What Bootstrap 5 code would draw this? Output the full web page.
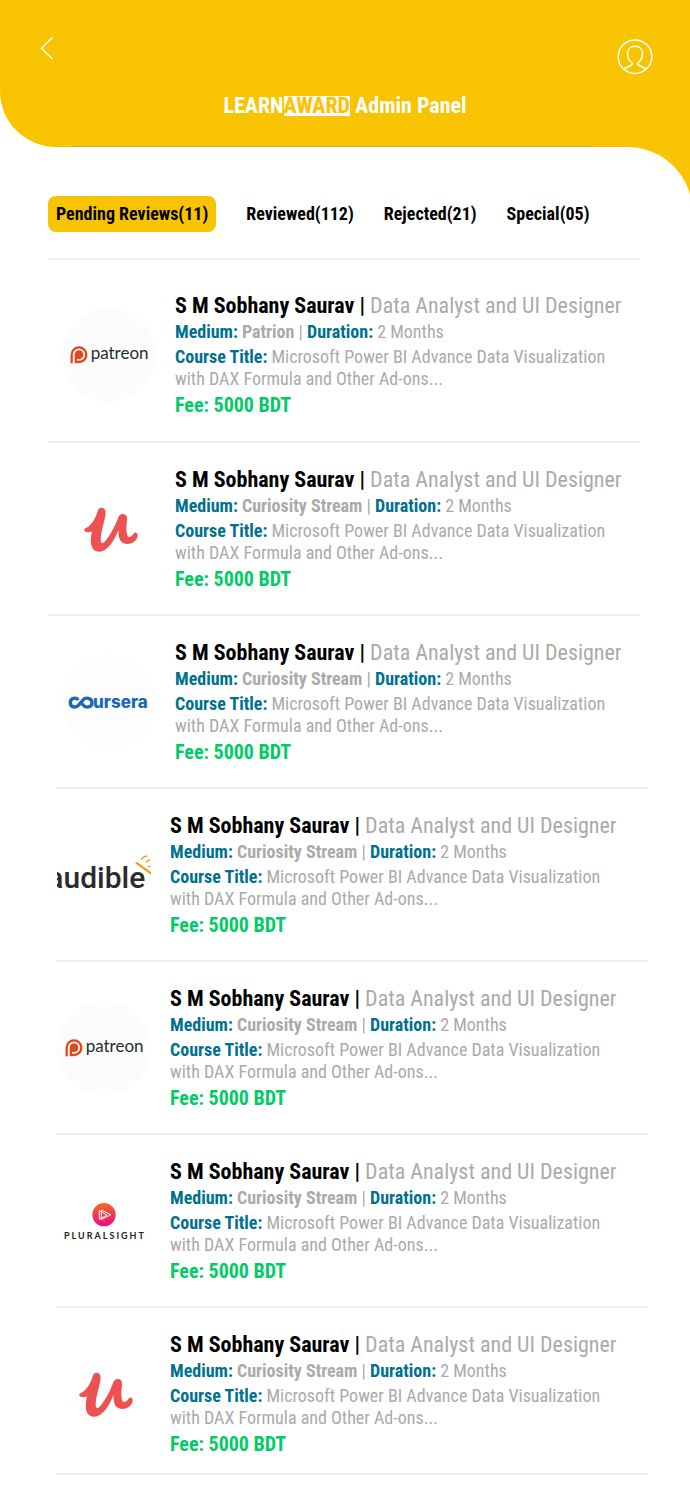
<!DOCTYPE html>
<html lang="en">
<head>
<meta charset="utf-8">
<meta name="viewport" content="width=device-width, initial-scale=1">
<title>LearnAward Admin Panel</title>
<link href="https://cdn.jsdelivr.net/npm/bootstrap@5.3.0/dist/css/bootstrap.min.css" rel="stylesheet">
<style>
  :root { --brand: #f8c300; }
  body { font-family: "Roboto Condensed", "Liberation Sans Narrow", Roboto, sans-serif; color: #000; background: #fff; }
  .topbar { background: var(--brand); border-bottom-left-radius: 56px; padding: 36px 36px 0 36px; }
  .topbar h1 { font-size: 22px; line-height: 24px; margin: 18px 0 28px; }
  .hl { background: #f8f8f8; color: var(--brand); line-height: 20px; display: inline-block; }
  .topline { height: 1px; background: #bdb751; margin: 0 62px 0 36px; }
  .corner { right: 0; top: 100%; }
  .tabs { padding: 49px 48px 26px; gap: 30px; }
  .tab { font-size: 18px; line-height: 36px; font-weight: 700; border: 0; background: none; padding: 0; border-radius: 8px; color: #000; }
  .tab.active { background: var(--brand); padding: 0 8px; }
  .reviews { margin: 0 50px 0 48px; }
  .reviews.shifted { margin: 0 42px 0 56px; }
  .review { border-top: 2px solid #eee; padding: 23px 0 22px 14px; gap: 19px; }
  .shifted .review { padding-left: 1px; }
  .review.first { padding-top: 32px; padding-bottom: 23px; }
  .review.last { padding-bottom: 16px; border-bottom: 2px solid #eee; }
  .logo { width: 94px; height: 94px; }
  .soft { color: #aaa; }
  .key { color: #00708f; font-weight: 700; }
  .who { font-size: 22px; line-height: 28px; }
  .medium { font-size: 18px; line-height: 24px; margin-bottom: 2px; }
  .course { font-size: 18px; line-height: 22px; margin-bottom: 2px; }
  .fee { font-size: 20px; line-height: 26px; color: #00cc66; font-weight: 700; }
</style>
</head>
<body>
<svg width="0" height="0" class="position-absolute" aria-hidden="true">
  <defs>
    <linearGradient id="sunset" x1="0" y1="0" x2="0" y2="1"><stop offset="0" stop-color="#f8691c"/><stop offset="1" stop-color="#e80a8a"/></linearGradient>
    <symbol id="patreon" viewBox="66 51 282 282">
      <circle cx="207" cy="192" r="141" fill="#fcfcfc"/>
      <path d="M95 217V191A22 22 0 1 1 117 213Q112 213 108 211" fill="none" stroke="#e6461a" stroke-width="7"/>
      <path d="M104 217V191A13 13 0 1 1 117 204Q113 204 111 203V217z" fill="#e6461a"/>
      <text x="152" y="204" font-family="Lato" font-size="51" fill="#232d32">patreon</text>
    </symbol>
    <symbol id="udemy" viewBox="36 0 282 282">
      <path d="M104 140C122 134 136 112 143 88C146 78 152 76 158 78C166 80 168 88 166 100C163 123 152 150 152 174C152 185 158 185 164 179C182 160 196 129 205 106C209 97 214 95 220 96C230 98 232 105 231 114C229 132 228 146 231 158C234 169 244 165 250 156C255 149 263 150 263 160C263 174 248 186 233 186C212 186 205 172 205 144C193 176 173 209 147 209C120 209 119 177 126 148C119 151 109 152 105 148C102 145 102 142 104 140Z" fill="#ec5252"/>
    </symbol>
    <symbol id="coursera" viewBox="36 12 282 282">
      <circle cx="177" cy="153" r="141" fill="#fdfdfd"/>
      <path d="M85 147C78 138 61 140 61 155C61 171 79 171 87 161L99 147C106 138 126 140 126 155C126 171 106 171 99 162L95 157" fill="none" stroke="#1c68b3" stroke-width="10"/>
      <text x="129" y="171" font-family="Inter" font-weight="800" font-size="51" fill="#1c68b3">ursera</text>
    </symbol>
    <symbol id="audible" viewBox="21 -39 282 282">
      <text x="-8" y="142" font-family="Roboto" font-weight="500" font-size="90" fill="#2b2b2b">audible</text>
      <path d="M258 65L304 98" stroke="#f7991c" stroke-width="7"/>
      <path d="M274 56Q279 46 292 45M287 64Q291 59 300 57M294 77L302 76" fill="none" stroke="#f7991c" stroke-width="4"/>
    </symbol>
    <symbol id="pluralsight" viewBox="21 -18 282 282">
      <circle cx="162" cy="104" r="35" fill="url(#sunset)"/>
      <path d="M154 90L182 104L154 119ZM148 92L171 105L148 118Z" fill="none" stroke="#fff" stroke-width="3"/>
      <text x="42" y="177" font-family="Lato" font-weight="700" font-size="27" letter-spacing="6" fill="#222">PLURALSIGHT</text>
    </symbol>
  </defs>
</svg>

<header class="topbar position-relative">
  <div class="d-flex justify-content-between align-items-start">
    <a href="#" aria-label="Back"><svg class="d-block" width="22" height="24" viewBox="0 0 22 24" fill="none" stroke="#fff" stroke-width="1.5"><path d="M16.500 1.500L5.500 12.300L16.500 23"/></svg></a>
    <a href="#" aria-label="Profile"><svg class="d-block" width="38" height="40" viewBox="0 0 38 40" fill="none" stroke="#fff" stroke-width="1.500"><circle cx="19" cy="20.700" r="16.800"/><path d="M8 33L15.500 29Q16.800 28 16 27C13 24.500 11.500 21 11.500 17.500C11.500 13 14.500 10.300 19 10.300S26.500 13 26.500 17.500C26.500 21 25 24.500 22 27Q21.200 28 22.500 29L30 33"/></svg></a>
  </div>
  <h1 class="text-center text-white fw-bold">LEARN<span class="hl">AWARD</span> Admin Panel</h1>
  <div class="topline"></div>
  <svg class="corner position-absolute" width="62" height="48" viewBox="0 0 62 48" aria-hidden="true"><path d="M0 0A64 64 0 0 1 62 48V0Z" fill="#f8c300"/></svg>
</header>

<main>
  <nav class="tabs d-flex" aria-label="Review filters">
    <button type="button" class="tab active">Pending Reviews(11)</button>
    <button type="button" class="tab">Reviewed(112)</button>
    <button type="button" class="tab">Rejected(21)</button>
    <button type="button" class="tab">Special(05)</button>
  </nav>

  <section class="reviews">
    <article class="review first d-flex align-items-center">
      <svg class="logo flex-shrink-0"><use href="#patreon"/></svg>
      <div>
        <div class="who"><b>S M Sobhany Saurav |</b> <span class="soft">Data Analyst and UI Designer</span></div>
        <div class="medium soft"><span class="key">Medium:</span> <b>Patrion</b> | <span class="key">Duration:</span> 2 Months</div>
        <div class="course soft"><span class="key">Course Title:</span> Microsoft Power BI Advance Data Visualization<br>with DAX Formula and Other Ad-ons...</div>
        <div class="fee">Fee: 5000 BDT</div>
      </div>
    </article>
    <article class="review d-flex align-items-center">
      <svg class="logo flex-shrink-0"><use href="#udemy"/></svg>
      <div>
        <div class="who"><b>S M Sobhany Saurav |</b> <span class="soft">Data Analyst and UI Designer</span></div>
        <div class="medium soft"><span class="key">Medium:</span> <b>Curiosity Stream</b> | <span class="key">Duration:</span> 2 Months</div>
        <div class="course soft"><span class="key">Course Title:</span> Microsoft Power BI Advance Data Visualization<br>with DAX Formula and Other Ad-ons...</div>
        <div class="fee">Fee: 5000 BDT</div>
      </div>
    </article>
    <article class="review d-flex align-items-center">
      <svg class="logo flex-shrink-0"><use href="#coursera"/></svg>
      <div>
        <div class="who"><b>S M Sobhany Saurav |</b> <span class="soft">Data Analyst and UI Designer</span></div>
        <div class="medium soft"><span class="key">Medium:</span> <b>Curiosity Stream</b> | <span class="key">Duration:</span> 2 Months</div>
        <div class="course soft"><span class="key">Course Title:</span> Microsoft Power BI Advance Data Visualization<br>with DAX Formula and Other Ad-ons...</div>
        <div class="fee">Fee: 5000 BDT</div>
      </div>
    </article>
  </section>

  <section class="reviews shifted">
    <article class="review d-flex align-items-center">
      <svg class="logo flex-shrink-0"><use href="#audible"/></svg>
      <div>
        <div class="who"><b>S M Sobhany Saurav |</b> <span class="soft">Data Analyst and UI Designer</span></div>
        <div class="medium soft"><span class="key">Medium:</span> <b>Curiosity Stream</b> | <span class="key">Duration:</span> 2 Months</div>
        <div class="course soft"><span class="key">Course Title:</span> Microsoft Power BI Advance Data Visualization<br>with DAX Formula and Other Ad-ons...</div>
        <div class="fee">Fee: 5000 BDT</div>
      </div>
    </article>
    <article class="review d-flex align-items-center">
      <svg class="logo flex-shrink-0"><use href="#patreon"/></svg>
      <div>
        <div class="who"><b>S M Sobhany Saurav |</b> <span class="soft">Data Analyst and UI Designer</span></div>
        <div class="medium soft"><span class="key">Medium:</span> <b>Curiosity Stream</b> | <span class="key">Duration:</span> 2 Months</div>
        <div class="course soft"><span class="key">Course Title:</span> Microsoft Power BI Advance Data Visualization<br>with DAX Formula and Other Ad-ons...</div>
        <div class="fee">Fee: 5000 BDT</div>
      </div>
    </article>
    <article class="review d-flex align-items-center">
      <svg class="logo flex-shrink-0"><use href="#pluralsight"/></svg>
      <div>
        <div class="who"><b>S M Sobhany Saurav |</b> <span class="soft">Data Analyst and UI Designer</span></div>
        <div class="medium soft"><span class="key">Medium:</span> <b>Curiosity Stream</b> | <span class="key">Duration:</span> 2 Months</div>
        <div class="course soft"><span class="key">Course Title:</span> Microsoft Power BI Advance Data Visualization<br>with DAX Formula and Other Ad-ons...</div>
        <div class="fee">Fee: 5000 BDT</div>
      </div>
    </article>
    <article class="review last d-flex align-items-center">
      <svg class="logo flex-shrink-0"><use href="#udemy"/></svg>
      <div>
        <div class="who"><b>S M Sobhany Saurav |</b> <span class="soft">Data Analyst and UI Designer</span></div>
        <div class="medium soft"><span class="key">Medium:</span> <b>Curiosity Stream</b> | <span class="key">Duration:</span> 2 Months</div>
        <div class="course soft"><span class="key">Course Title:</span> Microsoft Power BI Advance Data Visualization<br>with DAX Formula and Other Ad-ons...</div>
        <div class="fee">Fee: 5000 BDT</div>
      </div>
    </article>
  </section>
</main>
<script src="https://cdn.jsdelivr.net/npm/bootstrap@5.3.0/dist/js/bootstrap.bundle.min.js"></script>
</body>
</html>
